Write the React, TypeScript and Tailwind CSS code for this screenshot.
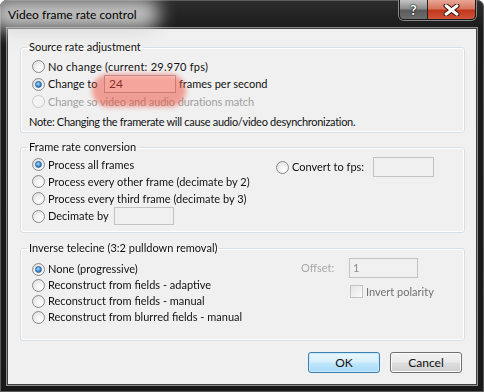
import React from "react";

function Radio({ checked, disabled }: { checked?: boolean; disabled?: boolean }) {
  return (
    <span
      className={`flex h-[13px] w-[13px] shrink-0 items-center justify-center rounded-full border ${
        disabled
          ? "border-[#c9c9c9] bg-[#f3f3f3]"
          : "border-[#8a8b8c] bg-[radial-gradient(circle_at_65%_70%,#ffffff_0%,#f1f1f1_45%,#d3d3d3_100%)]"
      }`}
    >
      {checked && (
        <span className="h-[7px] w-[7px] rounded-full border border-[#2a5f97] bg-[radial-gradient(circle_at_40%_35%,#a8dcff_0%,#3d8fdc_55%,#1f5596_100%)]" />
      )}
    </span>
  );
}

function Row({
  children,
  h = "h-[17px]",
}: {
  children: React.ReactNode;
  h?: string;
}) {
  return <div className={`flex ${h} items-center gap-[3px] whitespace-nowrap`}>{children}</div>;
}

export default function App() {
  return (
    <div className="relative flex h-[392px] w-[484px] flex-col overflow-hidden rounded-t-[7px] bg-[linear-gradient(180deg,#2e2e2e_0px,#1b1b1b_28px,#181818_100%)] font-['Lato','Liberation_Sans',sans-serif] text-[12px] leading-[14px] text-[#111] shadow-[inset_0_0_0_1px_#5c5c5c]">
      {/* Title bar */}
      <div className="relative flex h-[28px] shrink-0 items-start">
        <div className="pointer-events-none absolute left-[-10px] top-[-2px] h-[32px] w-[170px] rounded-full bg-[#d4d4d4] opacity-90 blur-[9px]" />
        <div className="relative pl-[8px] pt-[8px] text-[12px] leading-[14px] text-black">
          Video frame rate control
        </div>
        <div className="relative ml-auto mr-[8px] flex h-[20px] overflow-hidden rounded-b-[5px] border border-t-0 border-[#1a1a1a] shadow-[0_0_0_1px_#8a8a8a]">
          <div className="flex w-[28px] items-center justify-center border-r border-[#222] bg-[linear-gradient(180deg,#c4c4c4_0%,#8d8d8d_45%,#5b5b5b_55%,#6e6e6e_100%)] text-[14px] font-bold leading-none text-white [text-shadow:0_0_2px_#000,0_0_1px_#000]">
            ?
          </div>
          <div className="flex w-[47px] items-center justify-center bg-[linear-gradient(180deg,#e9a796_0%,#d8755f_45%,#c2361c_55%,#d0563a_100%)]">
            <svg width="17" height="12" viewBox="0 0 17 12">
              <path d="M3 1.8 L14 10.2 M14 1.8 L3 10.2" stroke="#3a1008" strokeWidth="5" strokeLinecap="round" />
              <path d="M3 1.8 L14 10.2 M14 1.8 L3 10.2" stroke="#ffffff" strokeWidth="3" strokeLinecap="round" />
            </svg>
          </div>
        </div>
      </div>

      {/* Client area */}
      <div className="mx-[7px] flex h-[357px] shrink-0 flex-col border border-[#3f3f3f] bg-[#f0f0f0] pl-[12px] pr-[11px] pt-[11px] text-[11px] shadow-[0_0_0_1px_#8c8c8c]">
        {/* Source rate adjustment */}
        <fieldset className="relative rounded-[3px] border border-[#d5dfe5] p-0 shadow-[inset_0_0_0_1px_#ffffff]">
          <legend className="ml-[6px] px-[2px] leading-[14px]">Source rate adjustment</legend>
          <div className="px-[11px] pb-[2px] pt-[4px]">
            <Row>
              <Radio />
              <span className="tracking-[0.25px]">No change (current: 29.970 fps)</span>
            </Row>
            <Row h="h-[18px]">
              <Radio checked />
              <span className="w-[53px]">Change to</span>
              <div className="flex h-[18px] w-[72px] items-center border border-[#abadb3] bg-white pl-[4px] text-[12px]">24</div>
              <span>frames per second</span>
            </Row>
            <Row>
              <Radio disabled />
              <span className="tracking-[-0.1px] text-[#a0a0a0]">Change so video and audio durations match</span>
            </Row>
            <div className="mt-[3px] flex h-[17px] items-center whitespace-nowrap">
              <span className="-ml-[3px] tracking-[-0.3px]">Note: Changing the framerate will cause audio/video desynchronization.</span>
            </div>
          </div>
          <div className="pointer-events-none absolute left-[71px] top-[20px] h-[33px] w-[94px] rounded-full bg-[#ee4e3c] opacity-50 blur-[2.5px]" />
        </fieldset>

        {/* Frame rate conversion */}
        <fieldset className="mt-[7px] rounded-[3px] border border-[#d5dfe5] p-0 blur-[0.5px] shadow-[inset_0_0_0_1px_#ffffff]">
          <legend className="ml-[6px] px-[2px] leading-[14px]">Frame rate conversion</legend>
          <div className="flex px-[11px] pb-[7px] pt-[2px]">
            <div className="w-[244px]">
              <Row>
                <Radio checked />
                <span>Process all frames</span>
              </Row>
              <Row>
                <Radio />
                <span>Process every other frame (decimate by 2)</span>
              </Row>
              <Row>
                <Radio />
                <span>Process every third frame (decimate by 3)</span>
              </Row>
              <Row h="h-[18px]">
                <Radio />
                <span className="w-[63px]">Decimate by</span>
                <div className="h-[18px] w-[60px] border border-[#c4c4c4] bg-[#f0f0f0]" />
              </Row>
            </div>
            <div className="mt-[1px] flex h-[20px] items-center gap-[3px] whitespace-nowrap">
              <Radio />
              <span className="w-[78px]">Convert to fps:</span>
              <div className="h-[20px] w-[61px] border border-[#c4c4c4] bg-[#f0f0f0]" />
            </div>
          </div>
        </fieldset>

        {/* Inverse telecine */}
        <fieldset className="mt-[8px] rounded-[3px] border border-[#d5dfe5] p-0 blur-[0.5px] shadow-[inset_0_0_0_1px_#ffffff]">
          <legend className="ml-[6px] px-[2px] leading-[14px]">Inverse telecine (3:2 pulldown removal)</legend>
          <div className="flex px-[11px] pb-[15px]">
            <div className="w-[269px] pt-[6px]">
              <Row h="h-[16px]">
                <Radio checked />
                <span>None (progressive)</span>
              </Row>
              <Row h="h-[16px]">
                <Radio />
                <span>Reconstruct from fields - adaptive</span>
              </Row>
              <Row h="h-[16px]">
                <Radio />
                <span>Reconstruct from fields - manual</span>
              </Row>
              <Row h="h-[16px]">
                <Radio />
                <span>Reconstruct from blurred fields - manual</span>
              </Row>
            </div>
            <div className="pt-[3px]">
              <div className="flex h-[20px] items-center">
                <span className="w-[48px] text-[#a8a8a8]">Offset:</span>
                <div className="flex h-[20px] w-[69px] items-center border border-[#c4c4c4] bg-[#f0f0f0] pl-[3px] text-[#8a8a8a]">1</div>
              </div>
              <div className="mt-[7px] flex h-[13px] items-center gap-[3px] whitespace-nowrap pl-[49px]">
                <span className="h-[13px] w-[13px] border border-[#c4c4c4] bg-[linear-gradient(135deg,#e4e4e4,#fbfbfb)]" />
                <span className="text-[#707070]">Invert polarity</span>
              </div>
            </div>
          </div>
        </fieldset>

        {/* Buttons */}
        <div className="mt-[11px] flex justify-end gap-[10px] pr-[3px]">
          <button className="flex h-[21px] w-[72px] items-center justify-center rounded-[3px] border border-[#3c7fb1] bg-[linear-gradient(180deg,#eaf6fd_0%,#d9f0fc_45%,#bee6fd_55%,#a7d9f5_100%)] text-[12px] shadow-[inset_0_0_0_1px_#c9eafb]">
            OK
          </button>
          <button className="flex h-[21px] w-[72px] items-center justify-center rounded-[3px] border border-[#707070] bg-[linear-gradient(180deg,#f2f2f2_0%,#ebebeb_45%,#dddddd_55%,#cfcfcf_100%)] text-[12px] shadow-[inset_0_0_0_1px_#fcfcfc]">
            Cancel
          </button>
        </div>
      </div>
    </div>
  );
}
